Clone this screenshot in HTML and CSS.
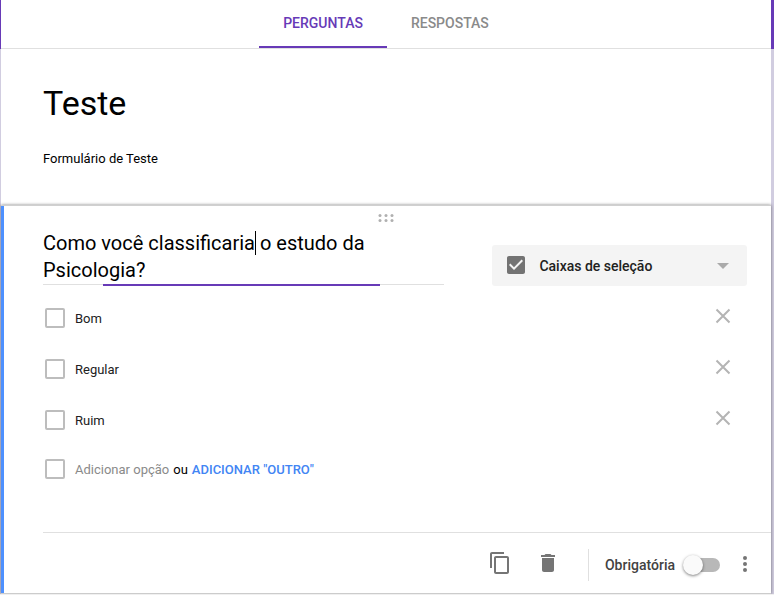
FILE: index.html
```html
<!DOCTYPE html>
<html lang="pt-BR">
<head>
<meta charset="utf-8">
<meta name="viewport" content="width=device-width, initial-scale=1">
<title>Teste</title>
<link rel="stylesheet" href="styles.css">
</head>
<body>
<header class="topbar">
  <nav class="tabs">
    <a class="tab tab-active" href="#perguntas">PERGUNTAS</a>
    <a class="tab" href="#respostas">RESPOSTAS</a>
  </nav>
</header>
<main class="form" id="perguntas">
  <section class="intro">
    <input class="form-title" type="text" value="Teste" aria-label="Título do formulário">
    <input class="form-description" type="text" value="Formulário de Teste" aria-label="Descrição do formulário">
  </section>

  <section class="question">
    <div class="handle">
      <svg width="16" height="8" viewBox="0 0 16 8" fill="#b0b0b0" aria-hidden="true">
        <circle cx="2" cy="1.500" r="1.500"/><circle cx="8" cy="1.500" r="1.500"/><circle cx="14" cy="1.500" r="1.500"/>
        <circle cx="2" cy="6.500" r="1.500"/><circle cx="8" cy="6.500" r="1.500"/><circle cx="14" cy="6.500" r="1.500"/>
      </svg>
    </div>

    <div class="question-head">
      <div class="question-field">
        <textarea class="question-text" rows="2" aria-label="Pergunta">Como você classificaria o estudo da Psicologia?</textarea>
        <span class="caret"></span>
        <span class="focus-line"></span>
      </div>
      <div class="type-picker">
        <svg class="type-icon" width="24" height="24" viewBox="0 0 24 24" aria-hidden="true">
          <path fill="#737373" d="M19 3H5c-1.110 0-2 .9-2 2v14c0 1.100.89 2 2 2h14c1.110 0 2-.9 2-2V5c0-1.100-.89-2-2-2zm-9 14l-5-5 1.410-1.410L10 14.170l7.590-7.590L19 8l-9 9z"/>
        </svg>
        <select class="type-select" aria-label="Tipo de pergunta">
          <option>Caixas de seleção</option>
        </select>
        <svg class="type-arrow" width="12" height="6" viewBox="0 0 12 6" aria-hidden="true"><path fill="#aaa" d="M0 0h12L6 6z"/></svg>
      </div>
    </div>

    <ul class="options">
      <li class="option">
        <input class="box" type="checkbox" id="o1"><label class="option-label" for="o1">Bom</label>
        <button class="remove" type="button" aria-label="Remover Bom"><svg width="16" height="16" viewBox="0 0 16 16"><path d="M1.500 1.500l13 13M14.500 1.500l-13 13"/></svg></button>
      </li>
      <li class="option">
        <input class="box" type="checkbox" id="o2"><label class="option-label" for="o2">Regular</label>
        <button class="remove" type="button" aria-label="Remover Regular"><svg width="16" height="16" viewBox="0 0 16 16"><path d="M1.500 1.500l13 13M14.500 1.500l-13 13"/></svg></button>
      </li>
      <li class="option">
        <input class="box" type="checkbox" id="o3"><label class="option-label" for="o3">Ruim</label>
        <button class="remove" type="button" aria-label="Remover Ruim"><svg width="16" height="16" viewBox="0 0 16 16"><path d="M1.500 1.500l13 13M14.500 1.500l-13 13"/></svg></button>
      </li>
      <li class="option option-add">
        <input class="box" type="checkbox" aria-label="Nova opção">
        <button class="add" type="button">Adicionar opção</button>
        <span class="or">ou</span>
        <button class="add-other" type="button">ADICIONAR "OUTRO"</button>
      </li>
    </ul>

    <footer class="actions">
      <button class="icon-button" type="button" aria-label="Duplicar">
        <svg width="24" height="24" viewBox="0 0 24 24" fill="#757575"><path d="M16 1H4c-1.100 0-2 .9-2 2v14h2V3h12V1zm3 4H8c-1.100 0-2 .9-2 2v14c0 1.100.9 2 2 2h11c1.100 0 2-.9 2-2V7c0-1.100-.9-2-2-2zm0 16H8V7h11v14z"/></svg>
      </button>
      <button class="icon-button" type="button" aria-label="Excluir">
        <svg width="24" height="24" viewBox="0 0 24 24" fill="#757575"><path d="M6 19c0 1.100.9 2 2 2h8c1.100 0 2-.9 2-2V7H6v12zM19 4h-3.500l-1-1h-5l-1 1H5v2h14V4z"/></svg>
      </button>
      <span class="separator"></span>
      <label class="required" for="required">Obrigatória</label>
      <input class="switch" type="checkbox" role="switch" id="required">
      <button class="more" type="button" aria-label="Mais opções">
        <svg width="24" height="24" viewBox="0 0 24 24" fill="#757575"><circle cx="12" cy="6" r="2"/><circle cx="12" cy="12" r="2"/><circle cx="12" cy="18" r="2"/></svg>
      </button>
    </footer>
  </section>
</main>
</body>
</html>
```
FILE: styles.css
```css
* {
  box-sizing: border-box;
}

body {
  margin: 0;
  background: #f0f0f0;
  color: #000;
  font: 13px/20px Roboto, "Liberation Sans", sans-serif;
}

input,
textarea,
select,
button {
  margin: 0;
  padding: 0;
  border: 0;
  border-radius: 0;
  outline: 0;
  background: transparent;
  color: inherit;
  font: inherit;
}

button {
  cursor: pointer;
}

svg {
  display: block;
}

.topbar {
  padding: 0 3px 0 1px;
  background: #673ab7;
}

.tabs {
  display: flex;
  justify-content: center;
  border-bottom: 1px solid #e0e0e0;
  background: #fff;
}

.tab {
  height: 48px;
  padding: 0 24px;
  border-bottom: 2px solid transparent;
  color: #8a8a8a;
  font-size: 14px;
  font-weight: 500;
  line-height: 46px;
  text-decoration: none;
}

.tab-active {
  border-color: #673ab7;
  color: #673ab7;
}

.form {
  padding: 0 3px 0 1px;
  background: #d1cde0;
}

.intro {
  padding: 32px 42px 36px;
  background: #fff;
}

.form-title,
.form-description {
  display: block;
  width: 100%;
}

.form-title {
  height: 44px;
  font-size: 34px;
  line-height: 44px;
}

.form-description {
  height: 20px;
  margin-top: 24px;
}

.question {
  position: relative;
  border-top: 1px solid #d0d0d0;
  border-bottom: 1px solid #ccc;
  background: #fff;
  box-shadow: 0 0 3px rgba(0, 0, 0, 0.5);
}

.question::before {
  content: "";
  position: absolute;
  top: 0;
  bottom: 0;
  left: 0;
  width: 3px;
  background: #4d90fe;
}

.handle {
  display: flex;
  justify-content: center;
  padding-top: 8px;
}

.question-head {
  display: flex;
  align-items: flex-start;
  gap: 48px;
  padding: 8px 24px 0 42px;
}

.question-field {
  position: relative;
  flex: 402;
}

.question-text {
  display: block;
  width: 100%;
  height: 55px;
  border-bottom: 1px solid #e0e0e0;
  font-size: 20px;
  line-height: 27px;
  overflow: hidden;
  resize: none;
}

.caret {
  position: absolute;
  top: 1px;
  left: 212px;
  width: 1px;
  height: 24px;
  background: #000;
}

.focus-line {
  position: absolute;
  bottom: -1px;
  left: 15%;
  width: 69%;
  height: 2px;
  background: #673ab7;
}

.type-picker {
  position: relative;
  flex: 255;
  margin-top: 15px;
}

.type-select {
  display: block;
  width: 100%;
  height: 41px;
  padding-left: 47px;
  border-radius: 3px;
  background: #f4f4f4;
  color: #212121;
  font-size: 14px;
  font-weight: 500;
  appearance: none;
}

.type-icon {
  position: absolute;
  top: 8px;
  left: 12px;
}

.type-arrow {
  position: absolute;
  top: 18px;
  right: 18px;
}

.options {
  margin: 0;
  padding: 7px 40px 38px 44px;
  list-style: none;
}

.option {
  display: flex;
  align-items: center;
  height: 51px;
}

.box {
  width: 20px;
  height: 20px;
  margin: 0 10px 2px 0;
  border: 2px solid #bdbdbd;
  border-radius: 2px;
  appearance: none;
}

.option-label {
  flex: 1;
  color: #212121;
}

.remove {
  margin-bottom: 6px;
}

.remove svg {
  fill: none;
  stroke: #b4b4b4;
  stroke-width: 2;
}

.option-add {
  height: 48px;
}

.add {
  color: #8a8a8a;
}

.or {
  margin: 0 4px;
}

.add-other {
  color: #4285f4;
  font-weight: 500;
}

.actions {
  display: flex;
  align-items: center;
  justify-content: flex-end;
  height: 61px;
  margin-left: 42px;
  padding: 4px 14px 0 0;
  border-top: 1px solid #e0e0e0;
}

.icon-button {
  margin: 0 24px 4px 0;
}

.separator {
  width: 1px;
  height: 32px;
  margin: 0 16px 0 4px;
  background: #e0e0e0;
}

.required {
  margin-right: 8px;
  color: #424242;
  font-size: 14px;
  font-weight: 500;
}

.switch {
  display: flex;
  align-items: center;
  width: 37px;
  height: 14px;
  border-radius: 7px;
  background: linear-gradient(#b8b8b8, #b8b8b8) right / 28px 14px no-repeat;
  appearance: none;
}

.switch::before {
  content: "";
  width: 20px;
  height: 20px;
  border-radius: 50%;
  background: #fafafa;
  box-shadow: 0 1px 3px rgba(0, 0, 0, 0.5);
}

.more {
  margin: 0 0 2px 13px;
}
```
